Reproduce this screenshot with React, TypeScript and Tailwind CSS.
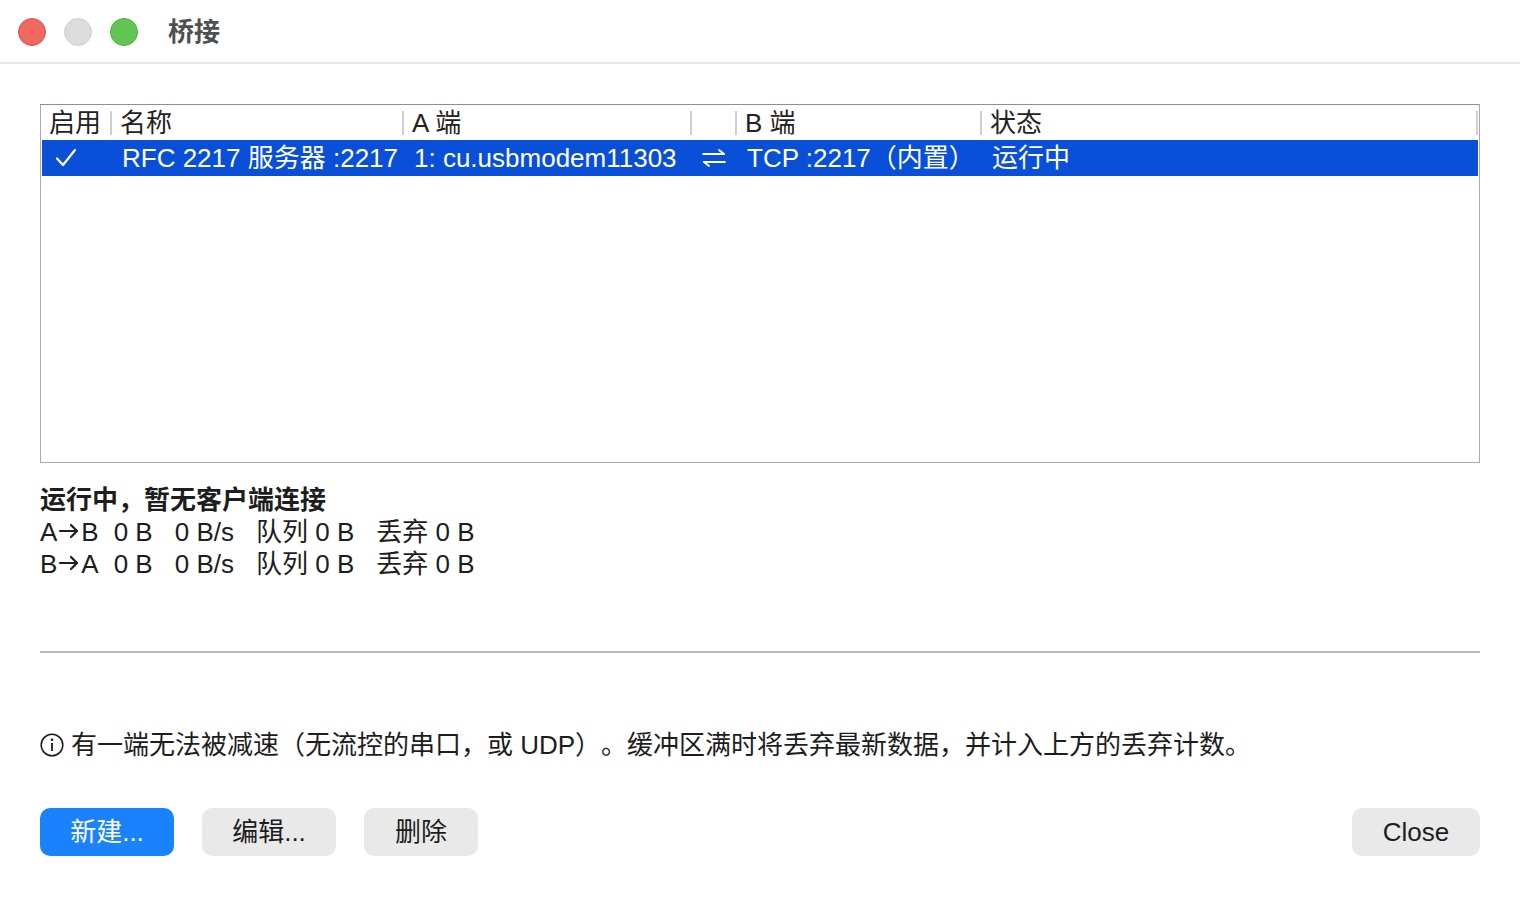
import React from "react";

const FONT = { fontFamily: '"Liberation Sans", "Noto Sans CJK SC", sans-serif' };

function Sep() {
  return <div className="w-[2px] h-[24px] bg-[#cfcfcf] shrink-0" />;
}

function HeadCell({ w, label, sep = true }: { w: string; label: string; sep?: boolean }) {
  return (
    <div className={`${w} flex items-center shrink-0 h-full`}>
      {sep && <Sep />}
      <span className="pl-[8px]">{label}</span>
    </div>
  );
}

function Check() {
  return (
    <svg width="22" height="20" viewBox="0 0 22 20" fill="none">
      <path d="M2 10.5 L8 17 L20 2" stroke="white" strokeWidth="2.2" strokeLinecap="round" strokeLinejoin="round" />
    </svg>
  );
}

function Swap() {
  return (
    <svg width="24" height="18" viewBox="0 0 24 18" fill="none" stroke="white" strokeWidth="1.8" strokeLinecap="round" strokeLinejoin="round">
      <path d="M1 5 H22" />
      <path d="M17 1 L22 5" />
      <path d="M2 13 H23" />
      <path d="M7 17 L2 13" />
    </svg>
  );
}

function Arrow() {
  return (
    <svg width="22" height="18" viewBox="0 0 22 18" fill="none" stroke="#1d1d1d" strokeWidth="2.2" strokeLinecap="round" strokeLinejoin="round" className="inline-block mx-[1px] -mt-[3px]">
      <path d="M2 9 H19" />
      <path d="M13 3 L19 9 L13 15" />
    </svg>
  );
}

function Info() {
  return (
    <svg width="24" height="24" viewBox="0 0 24 24" fill="none" className="shrink-0">
      <circle cx="12" cy="12" r="10.8" stroke="#1a1a1a" strokeWidth="1.5" />
      <circle cx="12" cy="6.8" r="1.3" fill="#1a1a1a" />
      <path d="M12 10 V18" stroke="#1a1a1a" strokeWidth="1.8" />
    </svg>
  );
}

function StatLine({ a, b }: { a: string; b: string }) {
  return (
    <div className="flex items-center whitespace-pre">
      <span className="inline-flex items-center">{a}<Arrow />{b}</span>
      <span className="ml-[15px]">0 B</span>
      <span className="ml-[22px]">0 B/s</span>
      <span className="ml-[22px]">队列 0 B</span>
      <span className="ml-[22px]">丢弃 0 B</span>
    </div>
  );
}

export default function App() {
  return (
    <div className="w-[1520px] h-[904px] bg-white text-[#1d1d1d] flex flex-col overflow-hidden text-[26px] [text-spacing-trim:space-all]" style={FONT}>
      {/* Title bar */}
      <div className="h-[64px] shrink-0 border-b-2 border-[#e6e6e6] flex items-center pl-[18px] pt-[2px]">
        <div className="flex items-center gap-[18px]">
          <div className="w-[28px] h-[28px] rounded-full bg-[#ee6a5f] border border-[#d9544c]" />
          <div className="w-[28px] h-[28px] rounded-full bg-[#dcdcdc] border border-[#cfcfcf]" />
          <div className="w-[28px] h-[28px] rounded-full bg-[#61c554] border border-[#4fae43]" />
        </div>
        <div className="ml-[30px] text-[26px] font-bold text-[#4f4f4f] leading-none">桥接</div>
      </div>

      <div className="flex flex-col px-[40px]">
        {/* Table */}
        <div className="mt-[40px] h-[359px] border border-[#a9a9a9] border-t-[#8f8f8f] flex flex-col">
          <div className="h-[35px] flex items-center text-[#222] leading-none">
            <HeadCell w="w-[69px]" label="启用" sep={false} />
            <HeadCell w="w-[292px]" label="名称" />
            <HeadCell w="w-[288px]" label="A 端" />
            <HeadCell w="w-[45px]" label="" />
            <HeadCell w="w-[245px]" label="B 端" />
            <HeadCell w="w-[496px]" label="状态" />
            <Sep />
          </div>
          <div className="h-[36px] mx-[1px] bg-[#0a4fd8] text-white flex items-center leading-none whitespace-nowrap">
            <div className="w-[68px] shrink-0 pl-[13px] flex items-center"><Check /></div>
            <div className="w-[292px] shrink-0 pl-[12px]">RFC 2217 服务器 :2217</div>
            <div className="w-[288px] shrink-0 pl-[12px]">1: cu.usbmodem11303</div>
            <div className="w-[45px] shrink-0 pl-[12px] flex items-center"><Swap /></div>
            <div className="w-[245px] shrink-0 pl-[12px]">TCP :2217（内置）</div>
            <div className="pl-[12px]">运行中</div>
          </div>
        </div>

        {/* Status */}
        <div className="mt-[21px] leading-[32px]">
          <div className="font-bold">运行中，暂无客户端连接</div>
          <StatLine a="A" b="B" />
          <StatLine a="B" b="A" />
        </div>

        <div className="mt-[71px] h-[2px] bg-[#b8b8b8]" />

        <div className="mt-[76px] flex items-center gap-[7px] leading-[32px]">
          <Info />
          <span>有一端无法被减速（无流控的串口，或 UDP）。缓冲区满时将丢弃最新数据，并计入上方的丢弃计数。</span>
        </div>

        <div className="mt-[47px] flex items-center">
          <button className="w-[134px] h-[48px] rounded-[10px] bg-[#1a82fb] text-white">新建...</button>
          <button className="ml-[28px] w-[134px] h-[48px] rounded-[10px] bg-[#e9e9e9] text-[#1d1d1d]">编辑...</button>
          <button className="ml-[28px] w-[114px] h-[48px] rounded-[10px] bg-[#e9e9e9] text-[#1d1d1d]">删除</button>
          <div className="flex-1" />
          <button className="w-[128px] h-[48px] rounded-[10px] bg-[#e9e9e9] text-[#1d1d1d]">Close</button>
        </div>
      </div>
    </div>
  );
}
